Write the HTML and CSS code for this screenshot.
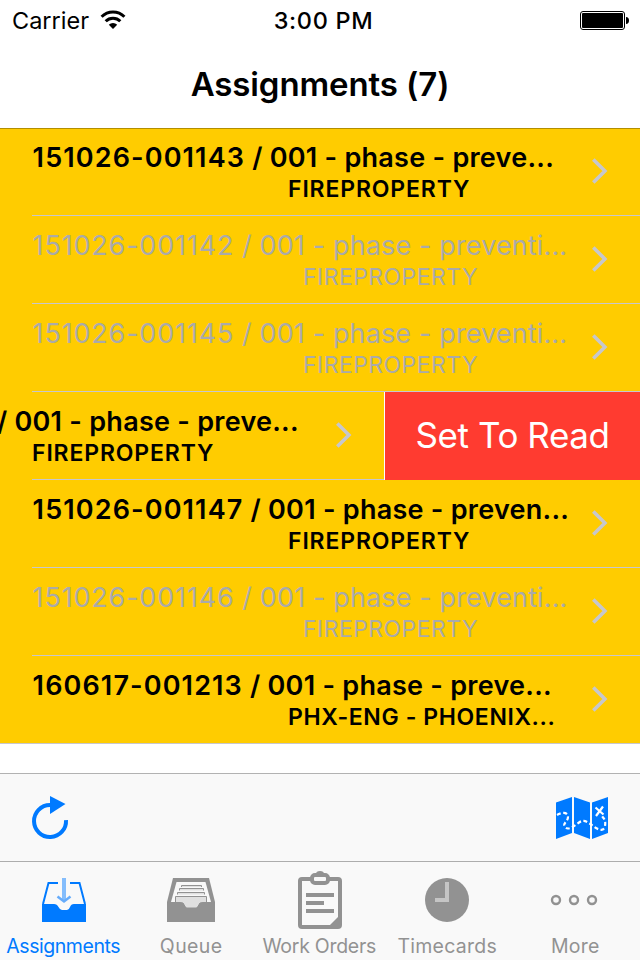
FILE: index.html
```
<!DOCTYPE html>
<html lang="en">
<head>
<meta charset="utf-8">
<title>Assignments</title>
<link rel="stylesheet" href="styles.css">
</head>
<body>
<svg class="defs" width="0" height="0"><symbol id="chevron" viewBox="0 0 18 30"><path d="M3.3 3.4 14.9 15 3.3 26.6" fill="none" stroke="#c7c7cc" stroke-width="3.6"/></symbol></svg>
<header class="status">
  <div class="carrier"><span>Carrier</span>
    <svg class="wifi" width="26" height="20" viewBox="0 0 26 20"><g fill="none" stroke="#000" stroke-width="3"><path d="M1.6 6.8a16.2 16.2 0 0 1 22.8 0"/><path d="M5.7 11.3a10.3 10.3 0 0 1 14.6 0"/></g><path d="M13 19 8.8 14.7a6 6 0 0 1 8.4 0z"/></svg>
  </div>
  <span class="time">3:00 PM</span>
  <svg class="battery" width="50" height="20" viewBox="0 0 50 20"><rect x=".5" y=".5" width="44" height="18" rx="2.5" fill="none" stroke="#000"/><rect x="2" y="2" width="41" height="15" rx="1"/><path d="M46 6q3 .3 3 3.5t-3 3.5z"/></svg>
</header>
<nav class="navbar"><h1>Assignments (7)</h1></nav>
<main class="list">
  <div class="row unread"><div class="cell"><div class="text"><p class="name"><span class="num">151026-001143</span> / 001 - phase - preve...</p><p class="site">FIREPROPERTY</p></div><svg class="chev"><use href="#chevron"/></svg></div></div>
  <div class="row read"><div class="cell"><div class="text"><p class="name"><span class="num">151026-001142</span> / 001 - phase - preventi...</p><p class="site">FIREPROPERTY</p></div><svg class="chev"><use href="#chevron"/></svg></div></div>
  <div class="row read"><div class="cell"><div class="text"><p class="name"><span class="num">151026-001145</span> / 001 - phase - preventi...</p><p class="site">FIREPROPERTY</p></div><svg class="chev"><use href="#chevron"/></svg></div></div>
  <div class="row unread swiped"><div class="cell"><div class="text"><p class="name"><span class="num">151026-001144</span> / 001 - phase - preve...</p><p class="site">FIREPROPERTY</p></div><svg class="chev"><use href="#chevron"/></svg></div><button class="action">Set To Read</button></div>
  <div class="row unread"><div class="cell"><div class="text"><p class="name"><span class="num">151026-001147</span> / 001 - phase - preven...</p><p class="site">FIREPROPERTY</p></div><svg class="chev"><use href="#chevron"/></svg></div></div>
  <div class="row read"><div class="cell"><div class="text"><p class="name"><span class="num">151026-001146</span> / 001 - phase - preventi...</p><p class="site">FIREPROPERTY</p></div><svg class="chev"><use href="#chevron"/></svg></div></div>
  <div class="row unread"><div class="cell"><div class="text"><p class="name"><span class="num">160617-001213</span> / 001 - phase - preve...</p><p class="site phx">PHX-ENG - PHOENIX...</p></div><svg class="chev"><use href="#chevron"/></svg></div></div>
</main>
<div class="toolbar">
  <svg width="38" height="46" viewBox="31 795 38 46"><path d="M66 820a16 16 0 1 1-16-15" fill="none" stroke="#007aff" stroke-width="4"/><path d="M50 796 65.500 804 50 814z" fill="#007aff"/></svg>
  <svg width="52" height="44" viewBox="556 795 52 44"><path d="M556 801.500 572 796v36l-16 6zM574 796l16 5.500V838l-16-6zM592 801.500 608 796v36l-16 6z" fill="#007aff"/><g fill="none" stroke="#fff" stroke-width="2.200"><path d="M557 814C562 811 568 811 568 816S562 822 565 826 574 825 579 821.500 588 821 593 825 604 831 605 825 604 818 602 815" stroke-dasharray="4 2.500"/><path d="M595.500 806.500 603.500 813.500M603 805.500 596 815"/></g></svg>
</div>
<footer class="tabs">
  <div class="tab active"><svg viewBox="34 870 60 60"><path d="M42 904H54Q57 904 58.500 907T62 910H67Q69 910 70 907T74 904H86V922H42z" fill="#007aff"/><path d="M43 904 48.500 883H58M70 883H79.500L85 904" fill="none" stroke="#007aff" stroke-width="2"/><path d="M64 878V901" fill="none" stroke="#84bdfc" stroke-width="4"/><path d="M57.500 896.500 64 901.500 70.500 896.500" fill="none" stroke="#66acfb" stroke-width="2.500"/></svg><span>Assignments</span></div>
  <div class="tab queue"><svg viewBox="162 870 60 60"><path d="M173 878H209L215 902V922H167V902z" fill="#929292"/><path d="M176.500 882H205.500L211 902H171z" fill="#f8f8f8"/><g fill="#e0e0e0" stroke="#929292"><path d="M181.500 887V885.500H201.500V887M179.500 890.500V888.500H203.500V890.500M177.500 894.500V892.500H204.500V894.500"/><path d="M175.500 903V896.500H206.500V903L200 903 197 908H186L183 903z"/></g><path d="M167 902H180Q183 902 184 905T187 908H196Q198 908 199 905T203 902H215V922H167z" fill="#929292"/></svg><span>Queue</span></div>
  <div class="tab orders"><svg viewBox="290 870 60 60"><rect x="300" y="879" width="40" height="48" rx="2" fill="none" stroke="#929292" stroke-width="4"/><path d="M328 927 340 915V927z" fill="#929292"/><path d="M316 874Q316 871 320 871T324 874z" fill="#929292"/><rect x="312" y="875" width="16" height="8" rx="3" fill="#f8f8f8" stroke="#929292" stroke-width="4"/><path d="M306 895H334M306 903H324M306 911H334" stroke="#929292" stroke-width="4"/></svg><span>Work Orders</span></div>
  <div class="tab cards"><svg viewBox="418 870 60 60"><circle cx="447" cy="900" r="22" fill="#929292"/><path d="M447 882V900H435" fill="none" stroke="#c5c5c5" stroke-width="4"/></svg><span>Timecards</span></div>
  <div class="tab more"><svg viewBox="546 870 60 60"><g fill="none" stroke="#929292" stroke-width="2.400"><circle cx="556" cy="900" r="4"/><circle cx="574" cy="900" r="4"/><circle cx="592" cy="900" r="4"/></g></svg><span>More</span></div>
</footer>
</body>
</html>
```
FILE: styles.css
```
* { box-sizing: border-box; margin: 0; padding: 0; }
body {
  width: 640px;
  height: 960px;
  display: flex;
  flex-direction: column;
  overflow: hidden;
  background: #fff;
  color: #000;
  font-family: Inter, "Liberation Sans", sans-serif;
}
svg { display: block; flex: none; }
.defs { position: absolute; }

.status {
  height: 40px;
  padding: 0 10px 0 12px;
  display: grid;
  grid-template-columns: 1fr auto 1fr;
  align-items: center;
  font-size: 23.5px;
  line-height: 41px;
}
.carrier { display: flex; align-items: center; gap: 10.5px; }
.wifi { margin-top: -2px; }
.time { font-weight: 500; letter-spacing: 0.66px; margin-left: 5px; }
.battery { justify-self: end; margin-top: 1px; }

.navbar {
  position: relative;
  z-index: 1;
  height: 88px;
  box-shadow: 0 1px 0 rgba(0, 0, 0, 0.3);
  text-align: center;
}
h1 {
  font-size: 33px;
  font-weight: 600;
  line-height: 88px;
  letter-spacing: -0.11px;
}

.list { height: 645px; }
.row {
  height: 88px;
  display: flex;
  overflow: hidden;
  background: linear-gradient(#c8c7cc, #c8c7cc) 32px 100% / 100% 1px no-repeat #fc0;
}
.row:last-child { background-position: 0 100%; }
.cell {
  width: 640px;
  flex: none;
  display: flex;
  justify-content: space-between;
  padding: 14px 32px 0 32px;
}
.text { width: 550px; white-space: nowrap; }
.name { padding-left: 0.6px; font-size: 27px; line-height: 32px; }
.site { margin: 1px 0 0 256px; font-size: 23px; line-height: 28px; }
.unread { font-weight: 600; }
.unread .name { letter-spacing: 0.26px; }
.unread .num { letter-spacing: 1.12px; }
.unread .site { letter-spacing: 0.86px; }
.unread .phx { letter-spacing: 0.61px; }
.read { color: #aaa; }
.read .name { letter-spacing: 0.13px; }
.read .num { letter-spacing: 0.82px; }
.read .site { margin-left: 271px; letter-spacing: 0.45px; }
.chev { width: 18px; height: 30px; margin-top: 14px; }

.swiped .cell { margin-left: -256px; }
.swiped .site { margin-left: 256px; }
.action {
  flex: none;
  width: 256px;
  height: 88px;
  padding-bottom: 2px;
  border: 0;
  border-left: 1px solid #fff;
  background: #ff3b30;
  color: #fff;
  font: 400 35px/86px Inter, "Liberation Sans", sans-serif;
  letter-spacing: -0.43px;
}

.toolbar {
  height: 88px;
  padding: 0 32px 0 31px;
  display: flex;
  align-items: center;
  justify-content: space-between;
  border-top: 1px solid #b2b2b2;
  background: #f9f9f9;
}
.tabs {
  height: 99px;
  display: grid;
  grid-template-columns: repeat(5, 128px);
  border-top: 1px solid #adadad;
  background: #f9f9f9;
  color: #929292;
}
.tab {
  padding-top: 8px;
  display: flex;
  flex-direction: column;
  align-items: center;
  font-size: 19.5px;
  line-height: 24px;
  white-space: nowrap;
}
.tab svg { width: 60px; height: 60px; margin-bottom: 4px; }
.tab span { margin-right: 1.6px; }
.active { color: #007aff; letter-spacing: -0.45px; }
.queue { letter-spacing: 0.41px; }
.orders { letter-spacing: -0.28px; }
.cards { letter-spacing: 0.25px; }
.more { letter-spacing: 0.22px; }
```
